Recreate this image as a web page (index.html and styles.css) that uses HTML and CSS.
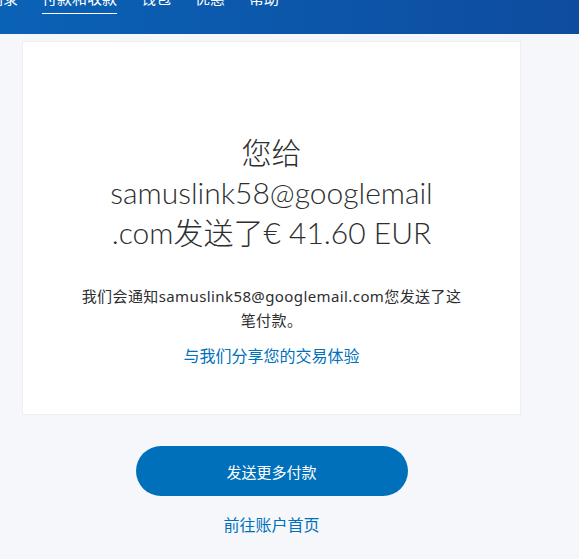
FILE: index.html
```html
<!doctype html>
<html lang="zh-CN">
    <head>
        <meta charset="UTF-8" />
        <meta name="viewport" content="width=device-width, initial-scale=1.0" />
        <title>付款和收款</title>
        <link rel="stylesheet" href="styles.css">
    </head>

    <body>
        <div id="header">
            <ul class="nav">
                <li class="nav-item">摘录</li>
                <li class="nav-item active">付款和收款</li>
                <li class="nav-item">钱包</li>
                <li class="nav-item">优惠</li>
                <li class="nav-item">帮助</li>
            </ul>
        </div>

        <div id="main">
            <div class="card">
                <h1 class="sent-title">您给 samuslink58@googlemail.com发送了€ 41.60 EUR</h1>
                <p class="notice">我们会通知samuslink58@googlemail.com您发送了这笔付款。</p>
                <a class="link share" href="#">与我们分享您的交易体验</a>
            </div>

            <button class="pbtn">发送更多付款</button>
            <a class="link home" href="#">前往账户首页</a>
        </div>
    </body>
</html>
```

FILE: styles.css
```css
body {
    margin: 0;
    font-family: "Noto Sans", "Noto Sans CJK SC", sans-serif;
    background: #f5f7fa;
    color: #2c2e2f;
}

#header {
    height: 34px;
    overflow: hidden;
    background: linear-gradient(to right, #0a62b6, #0e4c9f);
}

.nav {
    list-style: none;
    display: flex;
    margin: -12px 0 0 -12px;
    padding: 0;
}

.nav-item {
    color: white;
    font-size: 15px;
    line-height: 20px;
    padding-bottom: 5px;
    margin-right: 24px;
    border-bottom: solid 1px transparent;
}

.nav-item.active {
    border-bottom-color: white;
    margin-right: 24px;
}

#main {
    width: 499px;
    margin: 7px 0 0 22px;
    display: flex;
    flex-direction: column;
    align-items: center;
}

.card {
    box-sizing: border-box;
    width: 100%;
    padding: 90px 0 46px;
    background: white;
    border: solid 1px #eceef1;
    display: flex;
    flex-direction: column;
    align-items: center;
    text-align: center;
}

.sent-title {
    width: 327px;
    margin: 0;
    font-family: Lato, "Noto Sans CJK SC", sans-serif;
    font-weight: 300;
    font-size: 30px;
    line-height: 40px;
    overflow-wrap: anywhere;
}

.notice {
    width: 382px;
    margin: 32px 0 0;
    font-size: 15px;
    line-height: 24px;
    letter-spacing: 0.4px;
}

.link {
    color: #0070ba;
    text-decoration: none;
    font-size: 16px;
    line-height: 24px;
}

.share {
    margin-top: 12px;
}

.pbtn {
    width: 272px;
    height: 50px;
    margin-top: 31px;
    border: none;
    border-radius: 25px;
    background: #0070ba;
    color: white;
    font-family: "Noto Sans", "Noto Sans CJK SC", sans-serif;
    font-size: 15px;
    cursor: pointer;
}

.home {
    margin-top: 17px;
}
```
